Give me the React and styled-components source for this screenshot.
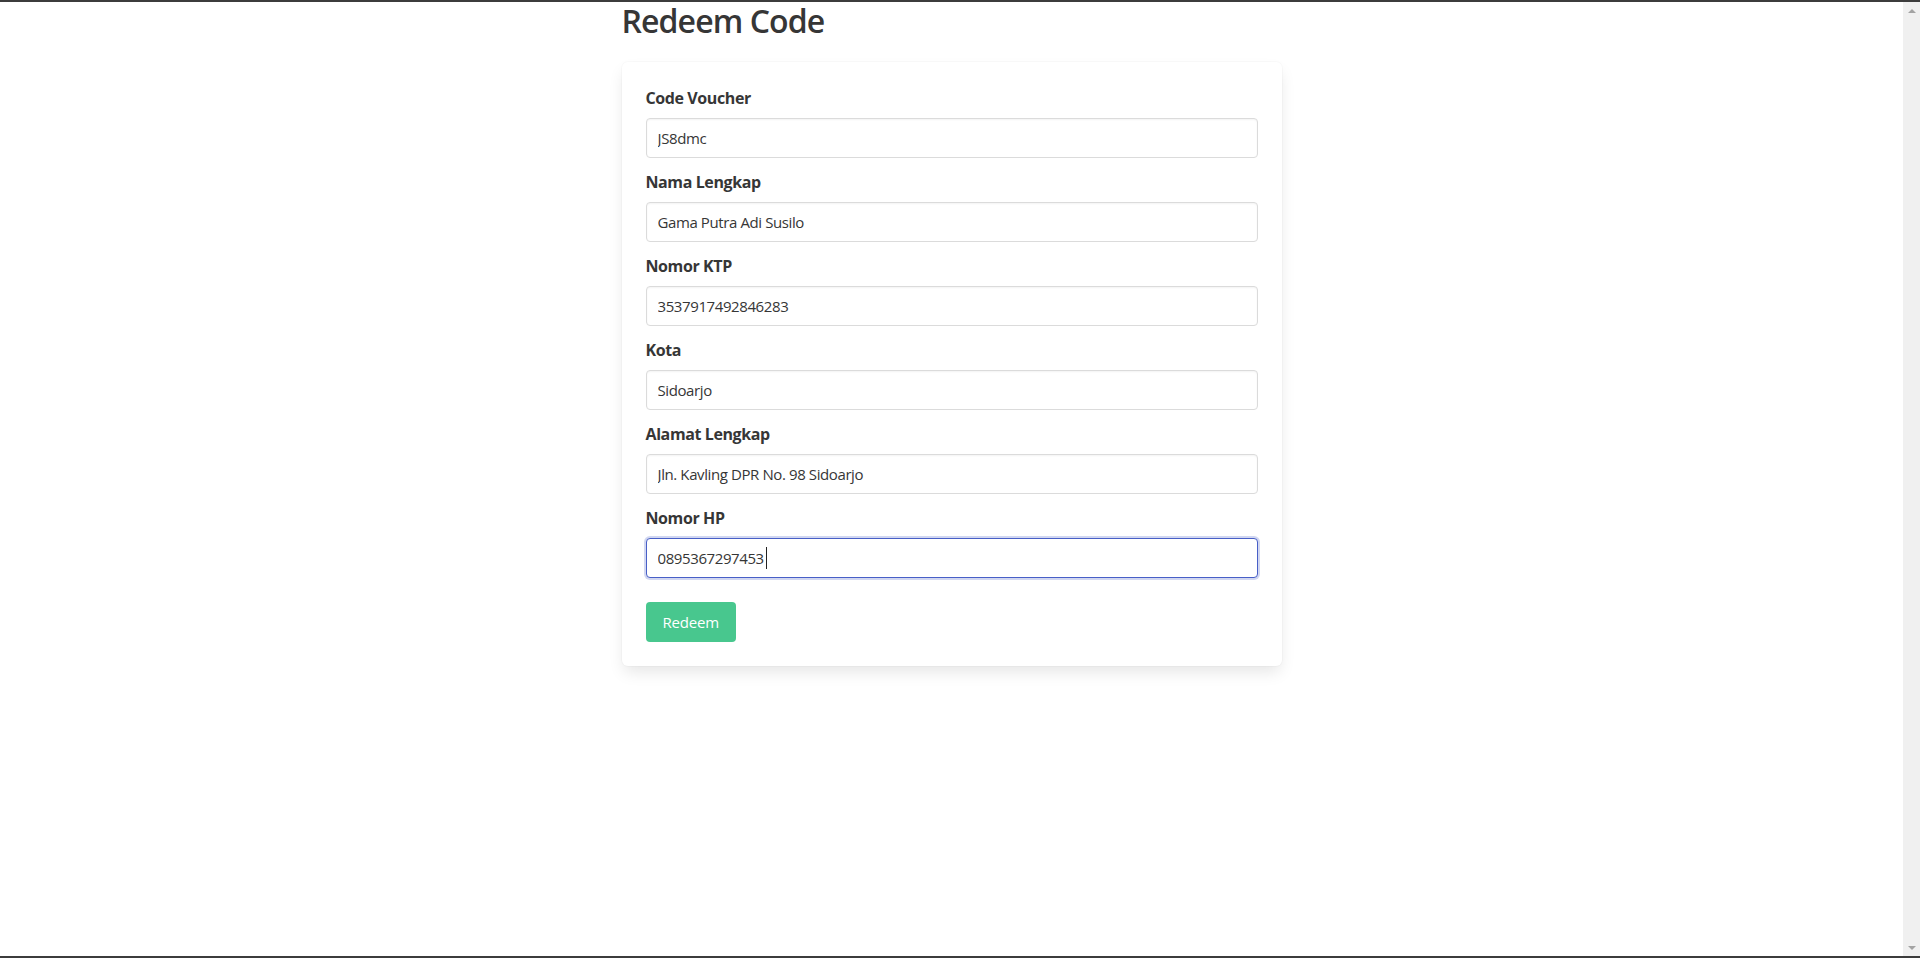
import React from "react";
import styled, { createGlobalStyle } from "styled-components";

const GlobalStyle = createGlobalStyle`
  html, body {
    margin: 0;
    padding: 0;
    height: 100%;
    overflow: hidden;
    background: #fff;
  }
  #root {
    height: 100%;
  }
  * {
    box-sizing: border-box;
  }
`;

const fields = [
  { label: "Code Voucher", value: "JS8dmc" },
  { label: "Nama Lengkap", value: "Gama Putra Adi Susilo" },
  { label: "Nomor KTP", value: "3537917492846283" },
  { label: "Kota", value: "Sidoarjo" },
  { label: "Alamat Lengkap", value: "Jln. Kavling DPR No. 98 Sidoarjo" },
  { label: "Nomor HP", value: "0895367297453", focused: true },
];

export default function App() {
  return (
    <>
      <GlobalStyle />
      <Frame>
        <Viewport>
          <Page>
            <Column>
              <Title>Redeem Code</Title>
              <Box onSubmit={(e) => e.preventDefault()}>
                {fields.map((f) => (
                  <Field key={f.label}>
                    <Label>{f.label}</Label>
                    <Control>
                      <Input type="text" defaultValue={f.value} $focused={f.focused} />
                      {f.focused && <Caret />}
                    </Control>
                  </Field>
                ))}
                <Button type="submit">Redeem</Button>
              </Box>
            </Column>
          </Page>
          <Scrollbar>
            <Arrow />
            <Arrow $down />
          </Scrollbar>
        </Viewport>
      </Frame>
    </>
  );
}

const Frame = styled.div`
  height: 958px;
  display: flex;
  flex-direction: column;
  border-top: 2px solid #3c3c3c;
  border-bottom: 2px solid #3c3c3c;
`;

const Viewport = styled.div`
  flex: 1;
  display: flex;
  min-height: 0;
`;

const Page = styled.main`
  flex: 1;
  display: flex;
  justify-content: center;
  font-family: "Segoe UI", "Open Sans", sans-serif;
  color: #4a4a4a;
`;

const Column = styled.section`
  width: 660px;
`;

const Title = styled.h1`
  margin: 0 0 22px;
  font-size: 32px;
  font-weight: 600;
  line-height: 38px;
  letter-spacing: -0.9px;
  color: #363636;
`;

const Box = styled.form`
  background: #fff;
  border-radius: 6px;
  padding: 24px;
  box-shadow: 0 8px 16px -2px rgba(10, 10, 10, 0.1), 0 0 0 1px rgba(10, 10, 10, 0.02);
`;

const Field = styled.div`
  margin-bottom: 12px;
`;

const Label = styled.label`
  display: block;
  font-size: 16px;
  font-weight: 700;
  line-height: 24px;
  letter-spacing: -0.4px;
  color: #363636;
  margin-bottom: 8px;
`;

const Control = styled.div`
  position: relative;
`;

const Input = styled.input`
  display: block;
  width: 100%;
  height: 40px;
  padding: 0 11px;
  font-family: inherit;
  font-size: 15px;
  letter-spacing: -0.4px;
  color: #363636;
  background: #fff;
  border: 1px solid ${(p) => (p.$focused ? "#485fc7" : "#dbdbdb")};
  border-radius: 4px;
  outline: none;
  box-shadow: ${(p) =>
    p.$focused
      ? "0 0 0 2px rgba(72, 95, 199, 0.25)"
      : "inset 0 1px 2px rgba(10, 10, 10, 0.05)"};
`;

const Caret = styled.span`
  position: absolute;
  left: 120px;
  top: 9px;
  width: 1px;
  height: 22px;
  background: #222;
`;

const Button = styled.button`
  margin-top: 12px;
  height: 40px;
  padding: 0 16px;
  font-family: inherit;
  font-size: 15px;
  letter-spacing: -0.2px;
  color: #fff;
  background: #48c78e;
  border: 1px solid transparent;
  border-radius: 4px;
  cursor: pointer;
`;

const Scrollbar = styled.div`
  width: 17px;
  background: #f0f0f0;
  display: flex;
  flex-direction: column;
  justify-content: space-between;
  align-items: center;
  padding: 7px 0 6px;
`;

const Arrow = styled.span`
  width: 0;
  height: 0;
  border-left: 4px solid transparent;
  border-right: 4px solid transparent;
  ${(p) =>
    p.$down
      ? "border-top: 4px solid #a3a3a3;"
      : "border-bottom: 4px solid #a3a3a3;"}
`;
